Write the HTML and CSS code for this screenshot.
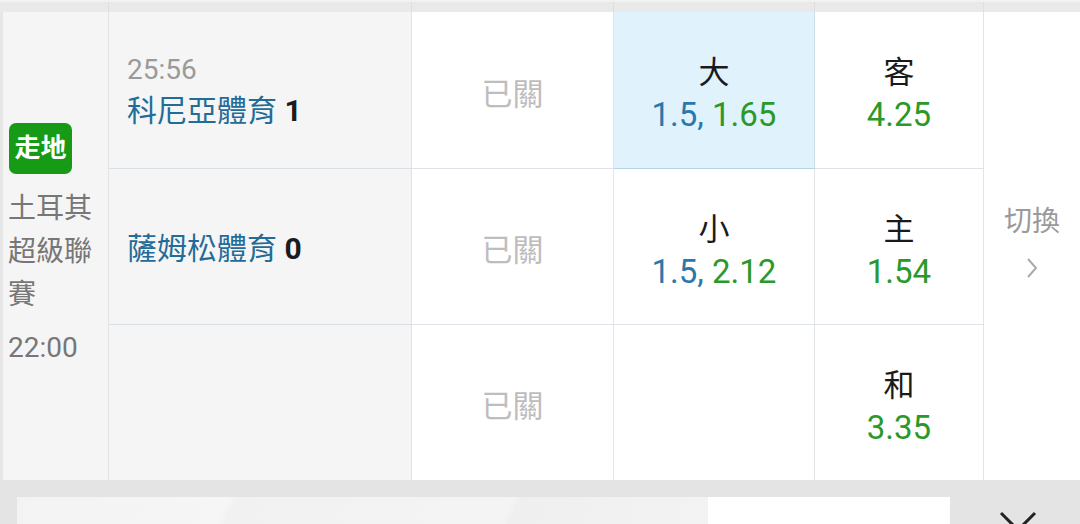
FILE: index.html
```html
<!DOCTYPE html>
<html lang="zh-Hant">
<head>
<meta charset="utf-8">
<title>走地</title>
<link rel="stylesheet" href="styles.css">
</head>
<body>
<div class="page">
  <div class="top-strip">
    <span class="strip-c1"></span><span class="strip-c2"></span><span class="strip-c3"></span><span class="strip-c4"></span><span class="strip-c5"></span><span class="strip-c6"></span>
  </div>
  <div class="board">
    <div class="league-cell">
      <div class="live-badge">走地</div>
      <div class="league-name">土耳其超級聯賽</div>
      <div class="kickoff">22:00</div>
    </div>

    <div class="team-cell r1">
      <div class="clock">25:56</div>
      <div class="team">科尼亞體育 <b class="score">1</b></div>
    </div>
    <div class="closed-cell r1"><span>已關</span></div>
    <div class="odds-cell r1 selected">
      <div class="label">大</div>
      <div class="price"><span class="line">1.5,</span> <span class="odd">1.65</span></div>
    </div>
    <div class="odds-cell r1">
      <div class="label">客</div>
      <div class="price"><span class="odd">4.25</span></div>
    </div>

    <div class="switch-cell">
      <div class="switch-text">切換</div>
      <svg class="chevron" width="14" height="24" viewBox="0 0 14 24"><polyline points="3,3 11,12 3,21" fill="none" stroke="#aaaaaa" stroke-width="2"/></svg>
    </div>

    <div class="team-cell r2">
      <div class="team">薩姆松體育 <b class="score">0</b></div>
    </div>
    <div class="closed-cell r2"><span>已關</span></div>
    <div class="odds-cell r2">
      <div class="label">小</div>
      <div class="price"><span class="line">1.5,</span> <span class="odd">2.12</span></div>
    </div>
    <div class="odds-cell r2">
      <div class="label">主</div>
      <div class="price"><span class="odd">1.54</span></div>
    </div>

    <div class="team-cell r3"></div>
    <div class="closed-cell r3"><span>已關</span></div>
    <div class="odds-cell r3"></div>
    <div class="odds-cell r3">
      <div class="label">和</div>
      <div class="price"><span class="odd">3.35</span></div>
    </div>
  </div>
  <div class="bottom-bar">
    <div class="bet-panel">
      <div class="bet-info"><span class="bet-text">投注</span></div>
      <div class="bet-input"></div>
    </div>
    <div class="close-btn">
      <svg width="40" height="40" viewBox="0 0 40 40"><path d="M3 3 L37 37 M37 3 L3 37" stroke="#222" stroke-width="3" fill="none"/></svg>
    </div>
  </div>
</div>
</body>
</html>
```

FILE: styles.css
```css
* { box-sizing: border-box; }
html, body { margin: 0; padding: 0; }
body {
  width: 1080px;
  height: 524px;
  overflow: hidden;
  background: #ffffff;
  font-family: Roboto, "Noto Sans CJK TC", "Noto Sans", sans-serif;
}
.page { width: 1080px; height: 524px; overflow: hidden; }

.top-strip {
  height: 12px;
  background: #e9e9e9;
  border-top: 2px solid #f2f2f2;
  display: grid;
  grid-template-columns: 109px 303px 202px 201px 169px 96px;
}
.top-strip span { border-right: 1px solid #dedede; }
.top-strip span:last-child { border-right: none; }

.board {
  display: grid;
  grid-template-columns: 109px 303px 202px 201px 169px 96px;
  grid-template-rows: 157px 156px 155px;
}

.league-cell {
  grid-column: 1;
  grid-row: 1 / 4;
  background: #f5f5f5;
  border-left: 3px solid #e6e6e6;
  border-right: 1px solid #dfe3e6;
  padding-left: 5px;
  display: flex;
  flex-direction: column;
  justify-content: center;
  align-items: flex-start;
}
.live-badge {
  width: 63px;
  height: 51px;
  margin-left: 1px;
  background: #179b17;
  color: #ffffff;
  border-radius: 7px;
  font-weight: 700;
  font-size: 26px;
  line-height: 51px;
  text-align: center;
}
.league-name {
  margin-top: 13px;
  width: 95px;
  font-size: 28px;
  line-height: 43px;
  color: #777777;
}
.kickoff {
  margin-top: 10px;
  font-size: 28px;
  line-height: 43px;
  color: #777777;
}

.team-cell {
  grid-column: 2;
  background: #f5f5f5;
  border-right: 1px solid #dfe3e6;
  border-bottom: 1px solid #d8dfe5;
  padding-left: 18px;
  display: flex;
  flex-direction: column;
  justify-content: center;
}
.team-cell.r1 { padding-bottom: 0; }
.team-cell.r2 { padding-top: 3px; }
.team-cell.r3 { border-bottom: none; }
.clock {
  font-size: 28px;
  line-height: 41px;
  color: #9a9a9a;
}
.team {
  font-size: 30px;
  line-height: 41px;
  color: #236c98;
  white-space: nowrap;
}
.score { color: #1c1c1c; font-weight: 700; }

.closed-cell {
  grid-column: 3;
  border-right: 1px solid #e2e5e8;
  border-bottom: 1px solid #dde3e8;
  display: flex;
  align-items: center;
  justify-content: center;
  padding-top: 2px;
  font-size: 31px;
  color: #bdbdbd;
}
.closed-cell.r3 { border-bottom: none; }

.odds-cell {
  border-right: 1px solid #e2e5e8;
  border-bottom: 1px solid #dde3e8;
  display: flex;
  flex-direction: column;
  align-items: center;
  justify-content: center;
  padding-top: 8px;
}
.odds-cell.r3 { border-bottom: none; }
.odds-cell.selected {
  background: #e0f2fc;
  border-bottom: 1px solid #b9d2e2;
  border-right: 1px solid #cfdde6;
}
.label {
  font-size: 31px;
  line-height: 42px;
  color: #1a1a1a;
}
.price {
  font-size: 33px;
  line-height: 42px;
  white-space: nowrap;
}
.line { color: #2a78ab; }
.odd { color: #2a992a; }

.switch-cell {
  grid-column: 6;
  grid-row: 1 / 4;
  display: flex;
  flex-direction: column;
  align-items: center;
  justify-content: center;
  gap: 17px;
  padding-bottom: 7px;
}
.switch-text {
  font-size: 28px;
  line-height: 34px;
  color: #9a9a9a;
}
.chevron { display: block; }

.bottom-bar {
  height: 44px;
  background: #e4e4e4;
  display: flex;
  align-items: flex-start;
  padding-top: 17px;
  padding-left: 17px;
}
.bet-panel {
  display: flex;
  width: 933px;
  height: 40px;
}
.bet-info {
  width: 691px;
  background: linear-gradient(115deg, #f3f3f3 0%, #f6f6f6 30%, #f1f1f1 31%, #f4f4f4 70%, #efefef 71%, #f3f3f3 100%);
  padding-left: 110px;
  padding-top: 24px;
  overflow: hidden;
}
.bet-text {
  font-size: 26px;
  line-height: 34px;
  color: #333333;
  display: block;
}
.bet-input {
  width: 242px;
  background: #ffffff;
}
.close-btn {
  padding-left: 48px;
}
.close-btn svg { display: block; margin-top: 13px; }
```
